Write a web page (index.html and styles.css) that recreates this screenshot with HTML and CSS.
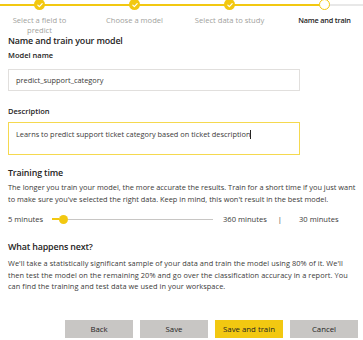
FILE: index.html
```html
<!DOCTYPE html>
<html>
<head>
<meta charset="utf-8">
<link rel="stylesheet" href="styles.css">
</head>
<body>
<div class="page">
  <div class="stepper">
    <div class="step done">
      <span class="dot"><svg viewBox="0 0 12 12" width="12" height="12"><path d="M3.4 6.2 L5.2 8 L8.6 4.4" fill="none" stroke="#fff" stroke-width="1.4" stroke-linecap="round" stroke-linejoin="round"/></svg></span>
      <span class="label">Select a field to predict</span>
    </div>
    <div class="step done">
      <span class="dot"><svg viewBox="0 0 12 12" width="12" height="12"><path d="M3.4 6.2 L5.2 8 L8.6 4.4" fill="none" stroke="#fff" stroke-width="1.4" stroke-linecap="round" stroke-linejoin="round"/></svg></span>
      <span class="label">Choose a model</span>
    </div>
    <div class="step done">
      <span class="dot"><svg viewBox="0 0 12 12" width="12" height="12"><path d="M3.4 6.2 L5.2 8 L8.6 4.4" fill="none" stroke="#fff" stroke-width="1.4" stroke-linecap="round" stroke-linejoin="round"/></svg></span>
      <span class="label">Select data to study</span>
    </div>
    <div class="step current">
      <span class="dot"></span>
      <span class="label">Name and train</span>
    </div>
  </div>

  <div class="content">
    <h1 class="title">Name and train your model</h1>

    <div class="field-label first">Model name</div>
    <div class="input">predict_support_category</div>

    <div class="field-label">Description</div>
    <div class="input textarea">Learns to predict support ticket category based on ticket description<span class="caret"></span></div>

    <h2 class="section">Training time</h2>
    <p class="text">The longer you train your model, the more accurate the results. Train for a short time if you just want<br>to make sure you've selected the right data. Keep in mind, this won't result in the best model.</p>

    <div class="slider-row">
      <span class="min">5 minutes</span>
      <div class="track">
        <span class="fill"></span>
        <span class="thumb"></span>
        <span class="rest"></span>
      </div>
      <span class="max">360 minutes</span>
      <span class="sep">|</span>
      <span class="value">30 minutes</span>
    </div>

    <h2 class="section next">What happens next?</h2>
    <p class="text wide">We'll take a statistically significant sample of your data and train the model using 80% of it. We'll<br>then test the model on the remaining 20% and go over the classification accuracy in a report. You<br>can find the training and test data we used in your workspace.</p>

    <div class="buttons">
      <button class="btn">Back</button>
      <button class="btn">Save</button>
      <button class="btn primary">Save and train</button>
      <button class="btn">Cancel</button>
    </div>
  </div>
</div>
</body>
</html>
```

FILE: styles.css
```css
html, body {
  margin: 0;
  padding: 0;
  background: #ffffff;
}
body {
  font-family: "Open Sans", "Noto Sans", sans-serif;
  color: #252423;
  width: 363px;
  height: 340px;
  overflow: hidden;
}
.page {
  display: flex;
  flex-direction: column;
}
.stepper {
  display: grid;
  grid-template-columns: repeat(4, 95px);
  margin-left: -8px;
  width: 380px;
  background: linear-gradient(to right, #f2c811 334px, #e8e8e8 334px) no-repeat 0 4px / 100% 2px;
}
.step {
  display: flex;
  flex-direction: column;
  align-items: center;
}
.dot {
  width: 11px;
  height: 11px;
  margin-top: -1px;
  border-radius: 50%;
  background: #f2c811;
  display: flex;
  align-items: center;
  justify-content: center;
  box-sizing: border-box;
}
.dot svg { width: 10px; height: 10px; }
.step.current .dot {
  background: #ffffff;
  border: 1.5px solid #f2c811;
}
.label {
  margin-top: 5px;
  max-width: 74px;
  text-align: center;
  font-size: 7.6px;
  line-height: 10px;
  color: #a19f9d;
}
.step.current .label {
  color: #252423;
  font-weight: 600;
  font-size: 7.3px;
  letter-spacing: -0.2px;
}
.content {
  padding: 0 8px;
  display: flex;
  flex-direction: column;
}
.title {
  margin: -1px 0 0 0;
  font-size: 8.9px;
  letter-spacing: -0.15px;
  line-height: 14px;
  font-weight: 600;
}
.field-label {
  margin-top: 15px;
  font-size: 7.5px;
  line-height: 11px;
  font-weight: 600;
}
.field-label.first { margin-top: 2px; }
.input {
  margin-top: 8px;
  width: 292px;
  height: 22px;
  box-sizing: border-box;
  border: 1px solid #e1dfdd;
  padding: 0 0 0 7px;
  font-size: 7.4px;
  line-height: 20px;
  color: #3b3a39;
}
.textarea {
  margin-top: 5px;
  height: 33px;
  border-color: #f5d94f;
  padding-top: 1px;
}
.caret {
  display: inline-block;
  width: 1px;
  height: 9px;
  background: #252423;
  vertical-align: -2px;
}
.section {
  margin: 11px 0 0 0;
  font-size: 8.9px;
  letter-spacing: -0.15px;
  line-height: 14px;
  font-weight: 600;
}
.section.next { margin-top: 15px; }
.text {
  margin: 2px 0 0 0;
  font-size: 7.4px;
  line-height: 11.5px;
  color: #3b3a39;
  white-space: nowrap;
}
.text.wide {
  margin-top: 4px;
  letter-spacing: 0.06px;
}
.slider-row {
  margin-top: 8px;
  display: flex;
  align-items: center;
  height: 12px;
  font-size: 7.6px;
  color: #3b3a39;
}
.min { width: 44px; }
.track {
  width: 161px;
  display: flex;
  align-items: center;
}
.fill {
  width: 7px;
  height: 1.5px;
  background: #f2c811;
}
.thumb {
  width: 9px;
  height: 9px;
  border-radius: 50%;
  background: #f2c811;
}
.rest {
  flex: 1;
  height: 1px;
  background: #c8c6c4;
}
.max { margin-left: 10px; }
.sep { margin-left: 11px; }
.value { margin-left: 17px; }
.buttons {
  margin-top: 27px;
  margin-right: -3px;
  display: flex;
  justify-content: flex-end;
  gap: 7px;
}
.btn {
  width: 68px;
  height: 18px;
  border: none;
  margin: 0;
  padding: 0;
  background: #c8c6c4;
  font-family: "Open Sans", "Noto Sans", sans-serif;
  font-size: 7.8px;
  color: #252423;
}
.btn.primary {
  background: #f2c811;
}
```
